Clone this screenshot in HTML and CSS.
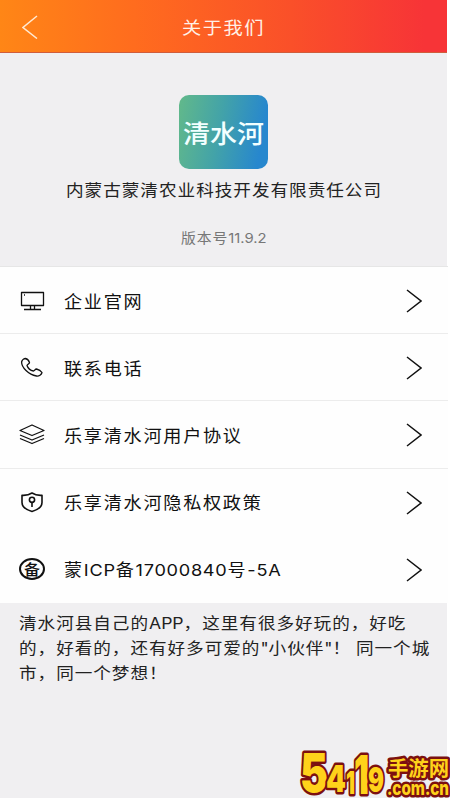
FILE: index.html
```html
<!DOCTYPE html>
<html lang="zh-CN">
<head>
<meta charset="utf-8">
<title>关于我们</title>
<link rel="stylesheet" href="styles.css">
</head>
<body>
<div class="screen">
  <header class="bar">
    <svg class="back" viewBox="0 0 16 24"><path d="M15 1L1 12.500L15 23.500"/></svg>
    <h1><span class="t">关于我们</span></h1>
  </header>
  <section class="brand">
    <svg class="logo" viewBox="0 0 89 74">
      <defs><linearGradient id="g" x1="0" y1="0" x2="1" y2=".15"><stop offset="0" stop-color="#62b98a"/><stop offset=".5" stop-color="#43a3a8"/><stop offset="1" stop-color="#2787ce"/></linearGradient></defs>
      <rect width="89" height="74" rx="10" fill="url(#g)"/>
      <text x="4" y="47.500" textLength="81" lengthAdjust="spacingAndGlyphs">清水河</text>
    </svg>
    <p class="company"><span class="t">内蒙古蒙清农业科技开发有限责任公司</span></p>
    <p class="version"><span class="t">版本号<b>11.9.2</b></span></p>
  </section>
  <ul class="list">
    <li><svg class="icon" viewBox="0 0 28 24"><path d="M3.500 3.500h22v13h-22zM12.500 17v3M16.500 17v3M6 20.500h17"/><path d="M6 6h1"/></svg><span class="t">企业官网</span><svg class="go" viewBox="0 0 16 24"><path d="M1 1L15 12L1 23"/></svg></li>
    <li><svg class="icon" viewBox="0 0 28 24"><path d="M3.600 6C4 4 6 2.500 7.500 2.500C9.500 3 11 5 11.500 6.500C11.500 8 9 8.500 9 9.500C10 12.500 13 14.500 15.500 15C16.500 15 17 13 18.500 13C20.500 13.500 23 15 24 16.500C23.500 18.500 21 20.500 18.500 20C10.500 18.500 3.500 11.500 3.600 6Z"/></svg><span class="t">联系电话</span><svg class="go" viewBox="0 0 16 24"><path d="M1 1L15 12L1 23"/></svg></li>
    <li><svg class="icon" viewBox="0 0 28 24"><path d="M14 2L26 7.500L14 12.500L2 7.500ZM2 12L14 17L26 12M2 15.500L14 20.500L26 15.500"/></svg><span class="t">乐享清水河用户协议</span><svg class="go" viewBox="0 0 16 24"><path d="M1 1L15 12L1 23"/></svg></li>
    <li><svg class="icon bold" viewBox="0 0 28 24"><path d="M14 2C11 4 7.500 4.500 4 4.300V11.500C4 16.500 9 19 14 20.500C19 19 24 16.500 24 11.500V4.300C20.500 4.500 17 4 14 2ZM14 11V16"/><circle cx="14" cy="8.800" r="2.600"/></svg><span class="t">乐享清水河隐私权政策</span><svg class="go" viewBox="0 0 16 24"><path d="M1 1L15 12L1 23"/></svg></li>
    <li><svg class="icon" viewBox="0 0 28 24"><ellipse class="ring" cx="14" cy="11" rx="12" ry="10"/><text x="6" y="16.500" textLength="16" lengthAdjust="spacingAndGlyphs">备</text></svg><span class="t">蒙<b class="wide">ICP</b>备<b class="wide">17000840</b>号<b class="wide">-5A</b></span><svg class="go" viewBox="0 0 16 24"><path d="M1 1L15 12L1 23"/></svg></li>
  </ul>
  <p class="about"><span class="t">清水河县自己的<b>APP</b>，这里有很多好玩的，好吃<br>的，好看的，还有好多可爱的<b>"</b>小伙伴<b>"</b>！ 同一个城<br>市，同一个梦想！</span></p>
  <svg class="mark" viewBox="0 0 152 56">
    <text x="1" y="48" font-size="54" textLength="28" lengthAdjust="spacingAndGlyphs">5</text><text x="27" y="48" font-size="37" textLength="20" lengthAdjust="spacingAndGlyphs">4</text><text x="47" y="50" font-size="32" textLength="9" lengthAdjust="spacingAndGlyphs">1</text><text x="55" y="50" font-size="54" textLength="15" lengthAdjust="spacingAndGlyphs">1</text><text x="69" y="48" font-size="34" textLength="16" lengthAdjust="spacingAndGlyphs">9</text>
    <text class="cn" x="89" y="32" textLength="61" lengthAdjust="spacingAndGlyphs">手游网</text>
    <text class="url" x="88" y="51" textLength="62" lengthAdjust="spacingAndGlyphs">.com.cn</text>
  </svg>
</div>
</body>
</html>
```
FILE: styles.css
```css
* { box-sizing: border-box; margin: 0; padding: 0; }
body { width: 450px; height: 800px; overflow: hidden; background: #fff; font-family: "Noto Sans CJK SC", sans-serif; color: #222; }
.screen { position: relative; width: 447px; height: 798px; background: #f0eff1; }
b { font-family: Inter, sans-serif; font-weight: 400; letter-spacing: 0; line-height: 1; }
.wide { letter-spacing: .65px; }
.t { display: inline-block; white-space: nowrap; transform: scaleX(1.1); transform-origin: left; }
.bar { height: 53px; display: flex; align-items: center; padding-left: 22px; background: linear-gradient(90deg, #ff8616, #ff6c1e 30%, #fa5029 65%, #f73437 95%); border-bottom: 1px solid #cf5d3c; }
.back { width: 16px; height: 24px; margin-top: 1px; fill: none; stroke: #ffe9d2; stroke-width: 1.5; }
.bar h1 { margin: 2px 0 0 144px; font-size: 17.5px; font-weight: 400; letter-spacing: 1.4px; color: #fff0e6; line-height: 26px; }
.brand { height: 213px; padding-top: 42px; display: flex; flex-direction: column; }
.logo { width: 89px; height: 74px; margin-left: 179px; }
.logo text { font-size: 25px; font-weight: 500; fill: #f2ffff; }
.company { margin: 8px 0 0 66px; font-size: 16px; line-height: 24px; letter-spacing: .9px; }
.version { margin: 24px 0 0 181px; font-size: 13.5px; line-height: 24px; letter-spacing: .8px; color: #777; }
.list { width: 448px; list-style: none; background: #fefefe; border-top: 1px solid #e6e6e6; }
.list li { height: 67.2px; display: flex; align-items: center; padding: 2px 26px 0 18px; border-bottom: 1px solid #ececec; font-size: 16.5px; line-height: 24px; letter-spacing: 1.55px; color: #111; }
.list li .t { margin-top: -1px; }
.list li:nth-child(n+4) { border-color: transparent; }
.icon { width: 28px; height: 24px; margin-right: 18px; fill: none; stroke: #111; stroke-width: 1.3; stroke-linejoin: round; }
.bold { stroke-width: 1.6; }
.icon text { font-size: 15px; fill: #111; stroke: none; font-weight: 500; letter-spacing: 0; }
.ring { stroke-width: 2; }
.go { width: 16px; height: 24px; margin-left: auto; fill: none; stroke: #111; stroke-width: 1.5; }
.about { padding: 7px 0 0 19px; font-size: 16px; line-height: 25px; letter-spacing: .88px; }
.mark { position: absolute; left: 299px; top: 744px; width: 152px; height: 56px; overflow: visible; }
.mark text { font-family: Inter, sans-serif; font-weight: 900; fill: #ffd21a; stroke: #7c1010; stroke-width: 5px; stroke-linejoin: round; paint-order: stroke; }
.mark .cn { font-family: "Noto Sans CJK SC", sans-serif; font-size: 20px; font-weight: 700; }
.mark .url { font-size: 19px; font-weight: 800; }
```
